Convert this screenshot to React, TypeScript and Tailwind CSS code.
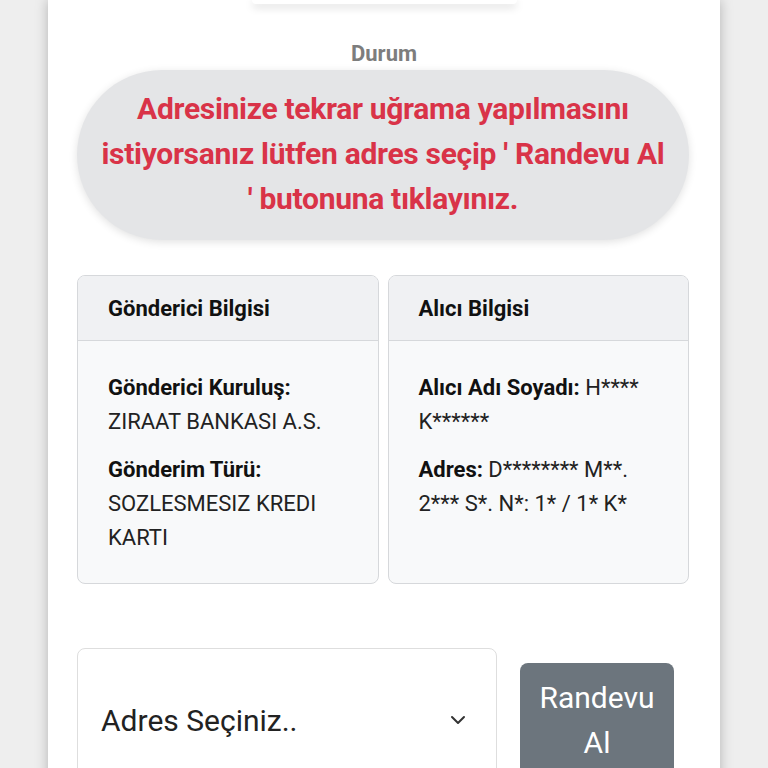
import React from 'react';
import { ChevronDown } from 'lucide-react';

function InfoCard({ title, children }: { title: string; children: React.ReactNode }) {
    return (
        <div className="flex-1 rounded-lg border border-[#d6d8db] bg-[#f8f9fa] overflow-hidden">
            <div className="h-[65px] px-[30px] flex items-center bg-[#f0f1f3] border-b border-[#d6d8db]">
                <span className="text-[22px] font-bold text-[#111]">{title}</span>
            </div>
            <div className="px-[30px] pt-[30px] pb-[28px] text-[22px] leading-[34px] text-[#222] flex flex-col gap-[14px]">
                {children}
            </div>
        </div>
    );
}

export default function App() {
    return (
        <div className="min-h-screen bg-[#eeeeee] flex justify-center" style={{ fontFamily: 'Roboto, "Noto Sans", sans-serif' }}>
            <div className="w-[672px] min-h-[768px] bg-white shadow-[0_0_12px_rgba(0,0,0,0.25)] flex flex-col items-center">
                {/* cut-off element above */}
                <div className="w-[265px] h-[4px] rounded-b-2xl bg-white shadow-[0_3px_8px_rgba(0,0,0,0.18)]" />

                <div className="mt-[35px] text-[22px] font-bold text-[#7d7d7d] leading-[30px]">Durum</div>

                {/* Status pill */}
                <div className="mt-[1px] ml-[-2px] w-[612px] h-[170px] rounded-full bg-[#e4e5e7] shadow-[0_2px_8px_rgba(0,0,0,0.12)] flex items-center justify-center pb-[3px]">
                    <p className="text-center text-[30px] font-bold leading-[45px] text-[#d93348] tracking-[-0.3px] whitespace-nowrap">
                        Adresinize tekrar uğrama yapılmasını<br />
                        istiyorsanız lütfen adres seçip ' Randevu Al<br />
                        ' butonuna tıklayınız.
                    </p>
                </div>

                {/* Info cards */}
                <div className="mt-[35px] ml-[-2px] w-[612px] flex gap-[9px]">
                    <InfoCard title="Gönderici Bilgisi">
                        <div>
                            <div className="font-bold text-[#111]">Gönderici Kuruluş:</div>
                            <div>ZIRAAT BANKASI A.S.</div>
                        </div>
                        <div>
                            <div className="font-bold text-[#111]">Gönderim Türü:</div>
                            <div>SOZLESMESIZ KREDI KARTI</div>
                        </div>
                    </InfoCard>
                    <InfoCard title="Alıcı Bilgisi">
                        <div>
                            <span className="font-bold text-[#111]">Alıcı Adı Soyadı:</span> H**** K******
                        </div>
                        <div>
                            <span className="font-bold text-[#111]">Adres:</span> D******** M**. 2*** S*. N*: 1* / 1* K*
                        </div>
                    </InfoCard>
                </div>

                {/* Address select + button */}
                <div className="mt-[64px] ml-[-2px] w-[612px] flex items-center gap-[23px]">
                    <div className="w-[420px] h-[144px] shrink-0 rounded-lg border border-[#dedede] bg-white flex items-center justify-between pl-[23px] pr-[26px]">
                        <span className="text-[30px] text-[#222]">Adres Seçiniz..</span>
                        <ChevronDown className="w-[24px] h-[24px] text-[#333]" strokeWidth={2} />
                    </div>
                    <button className="w-[154px] h-[114px] rounded-lg bg-[#6c757d] text-white text-[30px] leading-[45px] px-3">
                        Randevu Al
                    </button>
                </div>
            </div>
        </div>
    );
}
